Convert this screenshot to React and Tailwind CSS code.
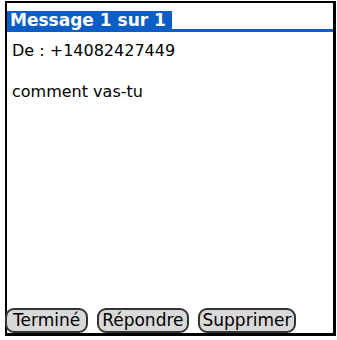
import React from 'react';

function PalmButton({ children, wide }) {
  return (
    <button
      className={`h-[25px] ${wide ? 'px-[6px]' : 'px-[3px]'} rounded-[9px] border-2 border-[#333] bg-[#d9d9d9] text-[17px] leading-none text-black flex items-center`}
    >
      {children}
    </button>
  );
}

export default function App() {
  return (
    <div className="w-[337px] h-[340px] bg-white" style={{ fontFamily: '"DejaVu Sans", Verdana, sans-serif' }}>
      <div className="ml-[5px] pt-[1px] w-[331px] h-[336px]">
        <div className="w-full h-full border-t-2 border-l-2 border-r-[3px] border-b-[3px] border-black flex flex-col">
          {/* Title */}
          <div className="pt-[8px] flex items-end border-b-[3px] border-[#0b5ec6]">
            <div className="bg-[#0b5ec6] h-[18px] pl-[3px] pr-[6px] flex items-center text-white font-bold text-[17px] leading-none">
              Message 1 sur 1
            </div>
          </div>

          {/* Body */}
          <div className="flex-1 pl-[5px] pt-[11px] text-[16px] leading-none text-black">
            <div>De : +14082427449</div>
            <div className="mt-[25px]">comment vas-tu</div>
          </div>

          {/* Buttons */}
          <div className="flex items-end gap-[9px] -ml-[2px]">
            <PalmButton wide>Terminé</PalmButton>
            <PalmButton>Répondre</PalmButton>
            <PalmButton>Supprimer</PalmButton>
          </div>
        </div>
      </div>
    </div>
  );
}
